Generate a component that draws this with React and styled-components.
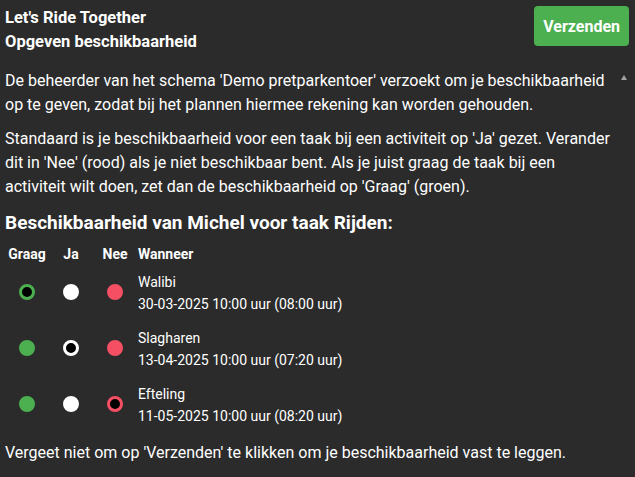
import React from "react";
import styled, { createGlobalStyle } from "styled-components";

const font = `"Segoe UI", Roboto, "Liberation Sans", sans-serif`;

const GlobalStyle = createGlobalStyle`
  html, body {
    margin: 0;
    padding: 0;
    background: #2b2b2b;
    color: #ffffff;
    font-family: ${font};
  }
`;

const days = [
  { where: "Walibi", when: "30-03-2025 10:00 uur (08:00 uur)", pick: "graag" },
  { where: "Slagharen", when: "13-04-2025 10:00 uur (07:20 uur)", pick: "ja" },
  { where: "Efteling", when: "11-05-2025 10:00 uur (08:20 uur)", pick: "nee" },
];

const colors = {
  graag: "#4caf50",
  ja: "#ffffff",
  nee: "#f44f63",
};

const App = () => {
  return (
    <Page>
      <GlobalStyle />
      <Header>
        <Titles>
          <div>Let's Ride Together</div>
          <div>Opgeven beschikbaarheid</div>
        </Titles>
        <SendButton>Verzenden</SendButton>
      </Header>
      <Body>
        <Content>
          <Text>
            De beheerder van het schema 'Demo pretparkentoer' verzoekt om je
            beschikbaarheid op te geven, zodat bij het plannen hiermee rekening
            kan worden gehouden.
          </Text>
          <Text>
            Standaard is je beschikbaarheid voor een taak bij een activiteit op
            'Ja' gezet. Verander dit in 'Nee' (rood) als je niet beschikbaar
            bent. Als je juist graag de taak bij een activiteit wilt doen, zet
            dan de beschikbaarheid op 'Graag' (groen).
          </Text>
          <Heading>Beschikbaarheid van Michel voor taak Rijden:</Heading>
          <Table>
            <thead>
              <tr>
                <Th>Graag</Th>
                <Th>Ja</Th>
                <Th>Nee</Th>
                <Th $left>Wanneer</Th>
              </tr>
            </thead>
            <tbody>
              {days.map((d) => (
                <tr key={d.where}>
                  {["graag", "ja", "nee"].map((k) => (
                    <DotCell key={k}>
                      <Dot $color={colors[k]} $selected={d.pick === k} />
                    </DotCell>
                  ))}
                  <When>
                    <div>{d.where}</div>
                    <div>{d.when}</div>
                  </When>
                </tr>
              ))}
            </tbody>
          </Table>
          <Footer>
            Vergeet niet om op 'Verzenden' te klikken om je beschikbaarheid
            vast te leggen.
          </Footer>
        </Content>
        <Gutter>
          <Arrow />
        </Gutter>
      </Body>
    </Page>
  );
};

export default App;

const Page = styled.div`
  display: flex;
  flex-direction: column;
  height: 100vh;
`;

const Header = styled.header`
  display: flex;
  justify-content: space-between;
  align-items: flex-start;
  height: 68px;
  box-sizing: border-box;
  padding: 6px 6px 0 5px;
`;

const Titles = styled.div`
  font-weight: bold;
  font-size: 16.5px;
  line-height: 24px;
`;

const SendButton = styled.button`
  height: 40px;
  padding: 0 9px;
  border: 0;
  border-radius: 4px;
  background: #4caf50;
  color: #ffffff;
  font-family: ${font};
  font-weight: bold;
  font-size: 16px;
`;

const Body = styled.div`
  flex: 1;
  display: grid;
  grid-template-columns: 1fr 22px;
  overflow: hidden;
`;

const Content = styled.div`
  padding: 1px 1px 0 5px;
  font-size: 16px;
  line-height: 24px;
`;

const Text = styled.p`
  margin: 0 0 10px 0;
`;

const Heading = styled.h3`
  margin: 0;
  font-size: 19px;
  line-height: 27px;
`;

const Table = styled.table`
  border-collapse: collapse;
  margin-top: 8px;
  font-size: 14px;
`;

const Th = styled.th`
  width: ${(p) => (p.$left ? "auto" : "44px")};
  padding: 1px 0 1px ${(p) => (p.$left ? "1px" : "0")};
  text-align: ${(p) => (p.$left ? "left" : "center")};
  line-height: 19px;
`;

const DotCell = styled.td`
  vertical-align: middle;
  padding: 0 0 3px 0;
`;

const Dot = styled.span`
  display: block;
  margin: 0 auto;
  width: 16px;
  height: 16px;
  box-sizing: border-box;
  border-radius: 50%;
  background: ${(p) => (p.$selected ? "#000000" : p.$color)};
  border: 3px solid ${(p) => p.$color};
`;

const When = styled.td`
  padding: 6px 0 6px 1px;
  font-size: 14px;
  line-height: 22px;
`;

const Footer = styled.p`
  margin: 8px 0 0 0;
`;

const Gutter = styled.div`
  display: flex;
  justify-content: center;
  padding-top: 7px;
`;

const Arrow = styled.div`
  width: 0;
  height: 0;
  border-left: 3px solid transparent;
  border-right: 3px solid transparent;
  border-bottom: 5px solid #a3a3a3;
`;
